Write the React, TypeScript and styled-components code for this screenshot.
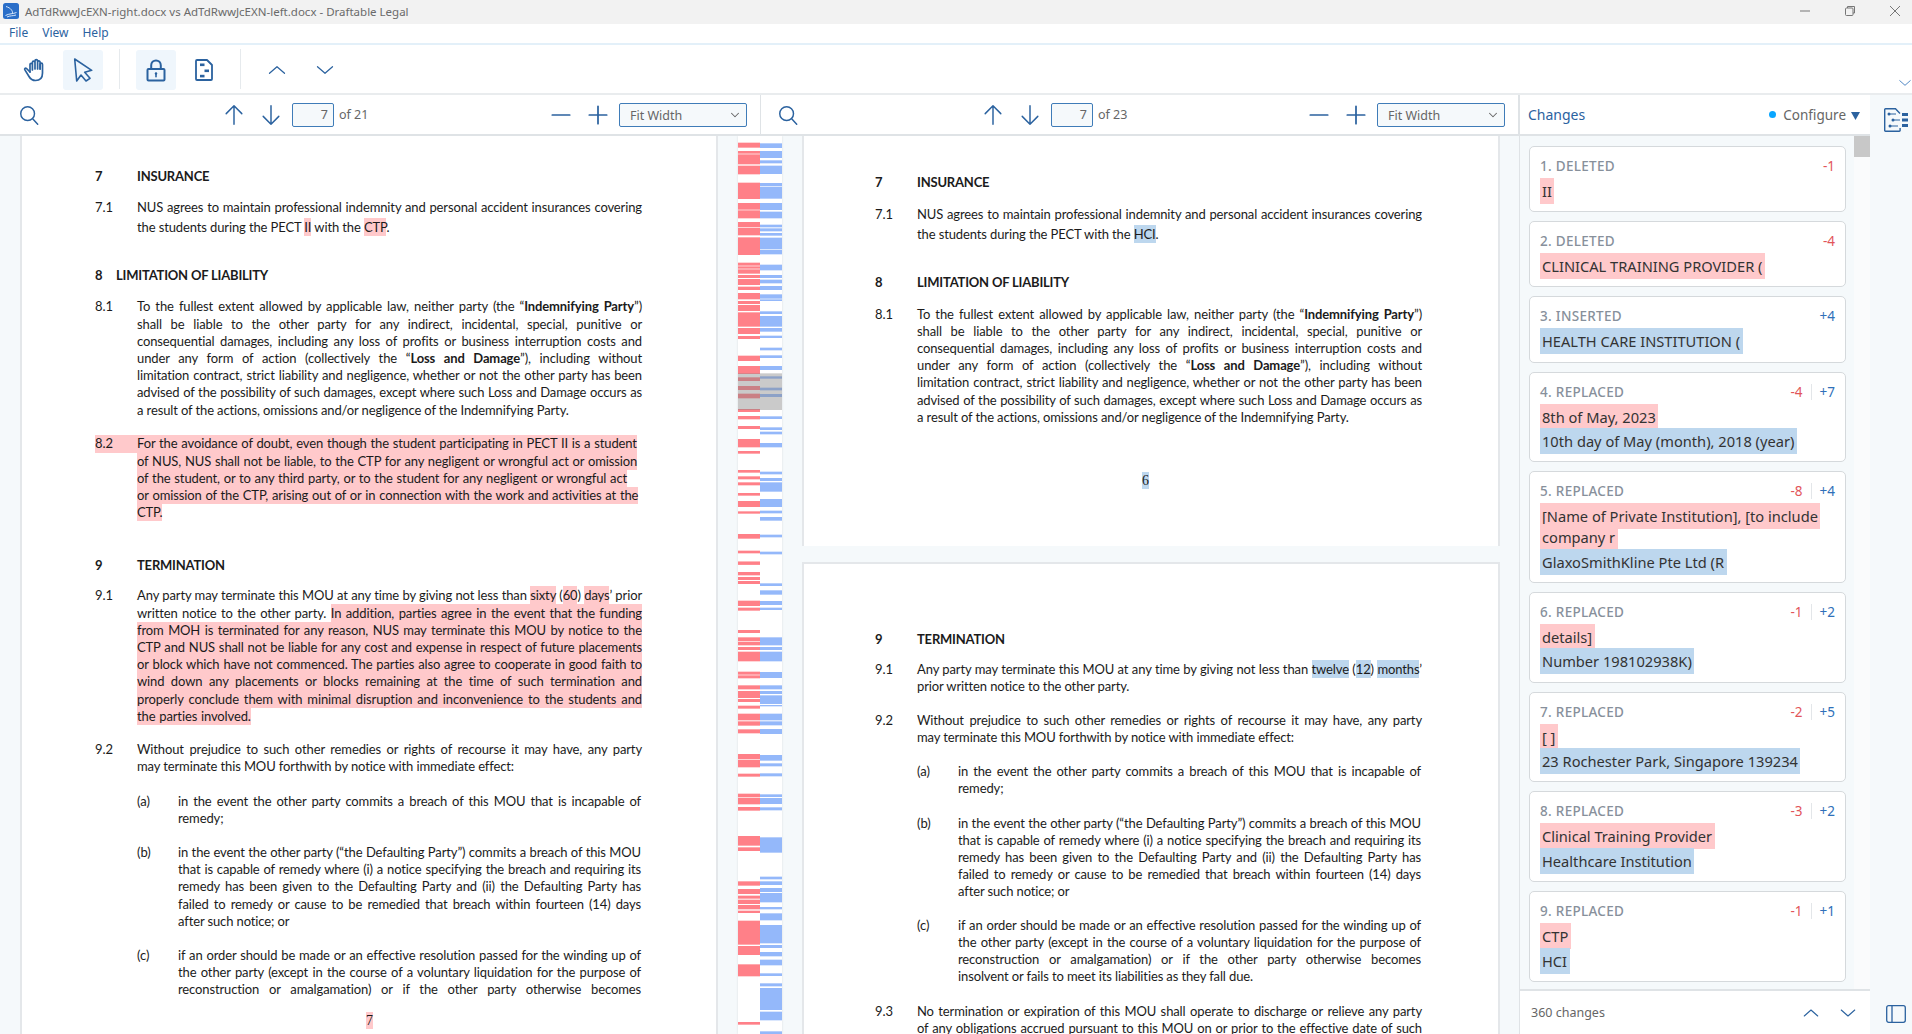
import React from "react";
import styled, { createGlobalStyle } from "styled-components";

const Global = createGlobalStyle`
  html, body { margin: 0; padding: 0; height: 100%; overflow: hidden; background: #fff; }
  * { box-sizing: border-box; }
  #root { height: 100%; }
`;

const ui = `"Noto Sans", "Open Sans", sans-serif`;
const blue = "#2b629f";

const Shell = styled.div`
  width: 1912px; height: 1034px; display: flex; flex-direction: column; overflow: hidden;
  font-family: ${ui}; color: #333;
`;

/* title bar */
const TitleBar = styled.div`
  height: 24px; background: #f2f2f2; display: flex; align-items: center; padding: 0 0 2px 3px; flex: none;
`;
const TitleText = styled.span`
  font-size: 11.5px; color: #6a6a6a; margin-left: 6px; flex: 1; white-space: nowrap;
`;
const WinControls = styled.div`
  display: flex; align-items: center; gap: 33px; padding-right: 11px; height: 100%;
`;
const MenuBar = styled.div`
  height: 21px; flex: none; display: flex; align-items: center; padding: 0 0 2px 9px; gap: 14px;
  border-bottom: 2px solid #e3f0f9; background: #fff;
`;
const MenuItem = styled.span`
  font-size: 12px; color: ${blue};
`;

/* tool bar */
const ToolBar = styled.div`
  height: 50px; flex: none; display: flex; align-items: center; padding-left: 15px; gap: 8px;
  border-bottom: 2px solid #e9ecee; position: relative;
`;
const ToolButton = styled.button<{ $on?: boolean }>`
  width: 40px; height: 40px; border: 0; padding: 0; border-radius: 3px; margin-top: 1px;
  background: ${(p) => (p.$on ? "#eff6fc" : "transparent")};
  display: flex; align-items: center; justify-content: center; color: ${blue};
`;
const ToolSep = styled.div`
  width: 1px; height: 40px; background: #e6eaed; margin: 0 8px;
`;
const Collapse = styled.span`
  position: absolute; right: 0; bottom: 3px; color: #3a78bd; line-height: 0;
`;

/* document tool bars */
const DocBars = styled.div`
  height: 41px; flex: none; display: flex;
`;
const DocBar = styled.div<{ $w: number; $pad: number }>`
  width: ${(p) => p.$w}px; padding-left: ${(p) => p.$pad}px; padding-right: 13px;
  display: flex; align-items: center; border-right: 1px solid #dfe3e6; border-bottom: 2px solid #dfe3e6;
`;
const Nav = styled.div`
  display: flex; align-items: center; margin-left: 175px;
`;
const IconBtn = styled.span<{ $w?: number }>`
  width: ${(p) => p.$w ?? 37.5}px; height: 24px; display: flex; align-items: center; justify-content: center; color: ${blue};
`;
const PageInput = styled.input`
  width: 42px; height: 24px; margin-left: 2px; border: 1px solid #3f7cb8; border-radius: 2px; background: #f5f9fb;
  text-align: right; padding: 0 5px; font: 12.5px ${ui}; color: #666; outline: none;
`;
const PageOf = styled.span`
  font-size: 12.5px; color: #666; margin-left: 5px;
`;
const ZoomGroup = styled.div`
  margin-left: auto; display: flex; align-items: center;
`;
const Select = styled.div`
  width: 128px; height: 24px; margin-left: 3px; border: 1px solid #3f7cb8; border-radius: 2px; background: #f5f9fb;
  display: flex; align-items: center; justify-content: space-between; padding: 1px 4px 0 10px;
  font-size: 12.5px; color: #666;
`;

/* main */
const Main = styled.div`
  flex: 1; display: flex; min-height: 0;
`;
const Viewer = styled.div`
  width: 1519px; display: flex; overflow: hidden; background: #f5f9fb;
`;
const LeftPane = styled.div`
  width: 718px; padding-left: 20px; overflow: hidden; flex: none;
`;
const RightPane = styled.div`
  width: 717px; overflow: hidden; flex: none; display: flex; flex-direction: column; padding-right: 19px;
`;
const Gutter = styled.div`
  width: 84px; flex: none; padding: 0 20px; overflow: hidden;
`;
const Page = styled.div<{ $top?: number; $bottom?: number; $left: number }>`
  background: #fff; flex: none;
  border-right: 2px solid #e4e7ea; border-left: 2px solid #e4e7ea;
  padding: ${(p) => p.$top ?? 0}px 0 ${(p) => p.$bottom ?? 0}px ${(p) => p.$left}px;
  font-family: "Lato", "Carlito", sans-serif; font-size: 13px; color: #1b1b1b;
`;
const Page2 = styled(Page)`
  margin-top: 16px; border-top: 2px solid #e4e7ea;
`;
const Heading = styled.div<{ $mt: number; $col?: number }>`
  display: grid; grid-template-columns: ${(p) => p.$col ?? 42}px auto; margin-top: ${(p) => p.$mt}px;
  line-height: 17.2px; font-weight: 700; letter-spacing: -0.2px;
`;
const Clause = styled.div<{ $mt: number; $lh?: number; $inset?: number; $w?: number }>`
  display: grid; grid-template-columns: ${(p) => p.$w ?? 42}px ${(p) => 505 - (p.$inset ?? 0)}px;
  margin-top: ${(p) => p.$mt}px; margin-left: ${(p) => p.$inset ?? 0}px;
  line-height: ${(p) => p.$lh ?? 17.2}px;
`;
const Num = styled.span<{ $on?: boolean }>`
  background: ${(p) => (p.$on ? "#ffc9cb" : "transparent")};
  height: 17.2px;
`;
const Line = styled.div<{ $j?: boolean; $fill?: boolean }>`
  letter-spacing: -0.12px;
  text-align: ${(p) => (p.$j ? "justify" : "left")};
  text-align-last: ${(p) => (p.$j ? "justify" : "left")};
  background: ${(p) => (p.$fill ? "#ffc9cb" : "transparent")};
`;
const Del = styled.span`
  background: #ffc9cb; padding: 1px 0;
`;
const Ins = styled.span`
  background: #bdd7ee; padding: 1px 0;
`;
const DelLine = styled(Del)`
  display: inline-block; padding: 0; height: 17.2px; word-spacing: 0.6px;
`;
const Folio = styled.div<{ $mt: number; $x: number }>`
  margin-top: ${(p) => p.$mt}px; margin-left: ${(p) => p.$x}px;
  font-family: "Liberation Serif", serif; font-size: 14px; line-height: 17.2px;
`;

/* changes panel */
const Panel = styled.div`
  width: 351px; flex: none; display: flex; flex-direction: column; margin-top: -41px; background: #fff;
  border-left: 1px solid #dfe3e6; position: relative;
`;
const PanelHead = styled.div`
  height: 41px; flex: none; display: flex; align-items: center; padding: 0 10px 0 8px; border-bottom: 2px solid #dfe3e6;
`;
const PanelTitle = styled.span`
  font-size: 14px; color: ${blue}; flex: 1;
`;
const Dot = styled.span`
  width: 7px; height: 7px; border-radius: 50%; background: #0aa6ff; margin-right: 7px;
`;
const Configure = styled.span`
  font-size: 13.5px; color: #666; margin-right: 5px;
`;
const Caret = styled.svg`
  margin-top: 2px;
`;
const PanelBody = styled.div`
  flex: 1; display: flex; min-height: 0; background: #f5f9fb;
`;
const CardList = styled.div`
  flex: 1; padding: 10px 8px 0 9px; display: flex; flex-direction: column; gap: 9px; overflow: hidden;
`;
const Scrollbar = styled.div`
  width: 16px; flex: none; background: #fafbfc;
`;
const Thumb = styled.div`
  height: 21px; background: #c8c8c8;
`;
const Card = styled.div`
  flex: none; width: 317px; background: #fff; border: 1px solid #d5d9dc; border-radius: 5px;
  padding: 9px 10px 9.6px 9.5px;
`;
const CardHead = styled.div`
  display: flex; align-items: center; height: 20px; margin-bottom: 5px; padding-left: 0.5px;
`;
const CardTitle = styled.span`
  font-size: 13.5px; font-weight: 500; color: #87909b; flex: 1; letter-spacing: 0.3px;
`;
const CountDel = styled.span`
  font-size: 13.5px; color: #e2555a;
`;
const CountIns = styled.span<{ $plain?: boolean }>`
  font-size: 13.5px; color: #2f70b9; line-height: 16px;
  ${(p) => (p.$plain ? "" : "border-left: 1px solid #e3e6e9; margin-left: 8px; padding-left: 8px;")}
`;
const Change = styled.div<{ $ins?: boolean }>`
  font-size: 14.65px; line-height: 20.6px; color: #333; margin-top: 4px;
  & > span {
    background: ${(p) => (p.$ins ? "#bdd7ee" : "#ffc9cb")};
    padding: 3px 2.5px; -webkit-box-decoration-break: clone; box-decoration-break: clone;
  }
  &:first-of-type { margin-top: 0; }
`;
const PanelFoot = styled.div`
  height: 45px; flex: none; display: flex; align-items: center; padding: 0 4px 0 11px; border-top: 2px solid #dfe3e6;
`;
const FootText = styled.span`
  font-size: 12.5px; color: #666; flex: 1;
`;
const FootBtn = styled.span`
  width: 37px; display: flex; justify-content: center; color: ${blue};
`;
const Rail = styled.div`
  width: 42px; flex: none; background: #f5f9fb; margin-top: -41px; display: flex; flex-direction: column;
  align-items: center; justify-content: space-between; padding: 13px 0 11px 10px; color: ${blue};
`;

/* icons */
const Svg: React.FC<{ s?: number; w?: number; sw?: number; children: React.ReactNode }> = ({ s = 24, w, sw = 1.6, children }) => (
  <svg width={w ?? s} height={s} viewBox="0 0 24 24" fill="none" stroke="currentColor" strokeWidth={sw} strokeLinecap="round" strokeLinejoin="round">
    {children}
  </svg>
);
const LogoMark = styled.svg`
  flex: none;
`;
const Logo = () => (
  <LogoMark width="16" height="16" viewBox="0 0 16 16">
    <rect width="16" height="16" rx="2.5" fill="#2a6ec8" />
    <path d="M3 3.5 C8 5 10 8 9.5 11 M2.5 12.5 C6 10.5 10 11 13.5 9.5 M4 14 C7 12.5 10 13 13 12" stroke="#d5e6fa" strokeWidth="1" fill="none" />
  </LogoMark>
);
const SearchI = () => <Svg s={24}><circle cx="10.5" cy="10.5" r="7.5" /><path d="M16 16l5.5 6" /></Svg>;
const ArrowUp = () => <Svg s={22}><path d="M12 22V2M3.5 10.5 12 2l8.5 8.5" /></Svg>;
const ArrowDown = () => <Svg s={22}><path d="M12 2v20M3.5 13.5 12 22l8.5-8.5" /></Svg>;
const MinusI = () => <Svg s={22} sw={1.9}><path d="M2.5 12h19" /></Svg>;
const PlusI = () => <Svg s={22} sw={1.9}><path d="M2.5 12h19M12 2.5v19" /></Svg>;
const ChevUp = ({ s = 20 }: { s?: number }) => <Svg s={s} sw={1.5}><path d="M3 16 12 8l9 8" /></Svg>;
const ChevDown = ({ s = 20 }: { s?: number }) => <Svg s={s} sw={1.5}><path d="M3 8l9 8 9-8" /></Svg>;
const Hand = () => (
  <Svg s={24} sw={1.7}>
    <path d="M7 14 3.5 10.5c-1-1-2.4.2-1.6 1.4L6 18.5c1.4 2.4 3.5 4 6.5 4 4.5 0 7-3 7-7.5V6.5c0-1.8-2.4-1.8-2.4 0V11" />
    <path d="M17.1 11V4.3c0-1.8-2.5-1.8-2.5 0V11M14.6 10V3c0-1.8-2.6-1.8-2.6 0v8M12 10.5V4.5c0-1.8-2.6-1.8-2.6 0V12M9.4 11V6.5C9.4 5 7 5 7 6.5V14" />
  </Svg>
);
const Cursor = () => (
  <Svg s={24} sw={1.6}><path d="M3.7 1 20.7 12.3 13.7 14.3 19 20.3 15 23 10 17 5.7 23Z" /></Svg>
);
const Lock = () => (
  <Svg s={24} sw={2}>
    <rect x="3.5" y="11" width="17" height="11.5" rx="1" />
    <path d="M7.2 11V7.2a4.8 4.8 0 0 1 9.6 0V11" />
    <circle cx="12" cy="15.5" r="1.2" fill="currentColor" stroke="none" />
    <path d="M12 15.5v3.2" strokeWidth="1.6" />
  </Svg>
);
const DocI = () => (
  <Svg s={24} sw={1.8}>
    <path d="M5 2h10l5 5v14a1 1 0 0 1-1 1H5a1 1 0 0 1-1-1V3a1 1 0 0 1 1-1Z" />
    <g fill="currentColor" stroke="none">
      <rect x="8" y="5.5" width="4.5" height="2.6" />
      <rect x="12.5" y="11.5" width="4.5" height="2.6" />
      <rect x="8" y="16.8" width="4.5" height="2.6" />
    </g>
  </Svg>
);
const RailDoc = () => (
  <svg width="24" height="24" viewBox="0 0 24 24" fill="none" stroke="currentColor" strokeWidth="1.4">
    <path d="M16 5.5 11.5.8H1.5a.8.8 0 0 0-.8.8v20.8a.8.8 0 0 0 .8.8h13.8a.8.8 0 0 0 .8-.8V20" />
    <path d="M5 6h7M9 12h7M6 18h8" strokeWidth="1" />
    <g fill="currentColor" stroke="none">
      <circle cx="5" cy="6" r="1.5" /><circle cx="9" cy="12" r="1.5" /><circle cx="6" cy="18" r="1.5" />
      <rect x="18" y="5" width="6" height="3" /><rect x="18" y="10.5" width="6" height="3" /><rect x="18" y="16" width="6" height="3" />
    </g>
  </svg>
);
const RailPanel = () => (
  <svg width="20" height="18" viewBox="0 0 20 18" fill="none" stroke="currentColor" strokeWidth="1.3">
    <rect x=".7" y=".7" width="18.6" height="16.6" rx="2" /><path d="M6 .7v16.6" />
  </svg>
);

/* overview strip */
const red: [number, number][] = [[128,143],[153,161],[163,193],[197,223],[248,297],[309,329],[331,355],[366,381],[383,406],[412,465],[488,497],[499,506],[508,521],[525,534],[537,555],[560,570],[579,598],[603,612],[615,633],[637,680],[684,702],[708,717],[767,783],[798,822],[832,843],[858,870],[881,895],[927,936],[948,958],[978,987],[1017,1042],[1053,1061],[1110,1118],[1129,1138],[1147,1156],[1179,1187],[1203,1221],[1234,1241],[1302,1316],[1352,1360],[1385,1394]];
const blu: [number, number][] = [[130,144],[153,174],[181,190],[197,222],[249,258],[260,296],[309,330],[335,355],[374,382],[385,394],[399,407],[413,447],[449,463],[494,511],[525,534],[539,550],[558,570],[583,596],[598,603],[634,642],[648,680],[684,695],[707,714],[743,751],[766,774],[798,810],[829,836],[863,871],[882,891],[949,957],[982,990],[995,1003],[1029,1042],[1115,1123],[1134,1143],[1147,1175],[1197,1221],[1232,1240],[1251,1262],[1304,1312],[1355,1363]];
const red2: [number, number][] = [[5,14],[36,46],[51,60],[63,72],[122,138],[143,152],[210,219],[232,243],[245,256],[261,270],[275,304],[335,344],[346,355],[376,388],[393,414],[417,426],[437,446],[461,481],[484,497],[508,520],[582,598],[600,622],[641,650],[701,712],[714,733],[741,752],[828,857],[862,873],[964,977],[987,1002],[1007,1016],[1019,1032],[1035,1048],[1052,1059],[1082,1154],[1158,1185],[1213,1249],[1386,1394]];
const blu2: [number, number][] = [[70,78],[91,104],[123,135],[143,150],[232,256],[261,270],[275,304],[336,354],[376,388],[393,402],[406,432],[435,439],[461,481],[484,496],[507,522],[585,602],[610,619],[640,649],[703,711],[714,732],[742,751],[832,878],[950,958],[964,975],[984,996],[999,1027],[1041,1048],[1060,1081],[1095,1150],[1155,1164],[1176,1189],[1199,1216],[1240,1248],[1270,1279],[1284,1350],[1355,1381],[1414,1422]];

const toY = (base: number, z: number) => base + z / 3 - 136;
const Strip = styled.svg`
  display: block; background: #fff; box-shadow: 0 0 2px #d8dcdf;
`;
const Overview = () => (
  <Strip width="44" height="898" viewBox="0 0 44 898">
    {[...red.map((b) => [100, ...b]), ...red2.map((b) => [560, ...b])].map(([base, a, z], i) => (
      <rect key={"r" + i} x="0" y={toY(base, a)} width="22" height={(z - a) / 3} fill="#ff8088" />
    ))}
    {[...blu.map((b) => [100, ...b]), ...blu2.map((b) => [560, ...b])].map(([base, a, z], i) => (
      <rect key={"b" + i} x="22" y={toY(base, a)} width="22" height={(z - a) / 3} fill="#94b8fa" />
    ))}
    <rect x="0" y={toY(100, 820)} width="44" height={110 / 3} fill="#808080" fillOpacity="0.42" />
  </Strip>
);

/* shared clause text */
const Clause81 = () => (
  <div>
    <Line $j>To the fullest extent allowed by applicable law, neither party (the “<b>Indemnifying Party</b>”)</Line>
    <Line $j>shall be liable to the other party for any indirect, incidental, special, punitive or</Line>
    <Line $j>consequential damages, including any loss of profits or business interruption costs and</Line>
    <Line $j>under any form of action (collectively the “<b>Loss and Damage</b>”), including without</Line>
    <Line $j>limitation contract, strict liability and negligence, whether or not the other party has been</Line>
    <Line $j>advised of the possibility of such damages, except where such Loss and Damage occurs as</Line>
    <Line>a result of the actions, omissions and/or negligence of the Indemnifying Party.</Line>
  </div>
);
const Lines92 = () => (
  <div>
    <Line $j>Without prejudice to such other remedies or rights of recourse it may have, any party</Line>
    <Line>may terminate this MOU forthwith by notice with immediate effect:</Line>
  </div>
);
const LinesA = () => (
  <div>
    <Line $j>in the event the other party commits a breach of this MOU that is incapable of</Line>
    <Line>remedy;</Line>
  </div>
);
const LinesB = () => (
  <div>
    <Line $j>in the event the other party (“the Defaulting Party”) commits a breach of this MOU</Line>
    <Line $j>that is capable of remedy where (i) a notice specifying the breach and requiring its</Line>
    <Line $j>remedy has been given to the Defaulting Party and (ii) the Defaulting Party has</Line>
    <Line $j>failed to remedy or cause to be remedied that breach within fourteen (14) days</Line>
    <Line>after such notice; or</Line>
  </div>
);

const cards: { t: string; d?: string; i?: string; del?: string; ins?: string }[] = [
  { t: "1. DELETED", d: "-1", del: "II" },
  { t: "2. DELETED", d: "-4", del: "CLINICAL TRAINING PROVIDER (" },
  { t: "3. INSERTED", i: "+4", ins: "HEALTH CARE INSTITUTION (" },
  { t: "4. REPLACED", d: "-4", i: "+7", del: "8th of May, 2023", ins: "10th day of May (month), 2018 (year)" },
  { t: "5. REPLACED", d: "-8", i: "+4", del: "[Name of Private Institution], [to include company r", ins: "GlaxoSmithKline Pte Ltd (R" },
  { t: "6. REPLACED", d: "-1", i: "+2", del: "details]", ins: "Number 198102938K)" },
  { t: "7. REPLACED", d: "-2", i: "+5", del: "[ ]", ins: "23 Rochester Park, Singapore 139234" },
  { t: "8. REPLACED", d: "-3", i: "+2", del: "Clinical Training Provider", ins: "Healthcare Institution" },
  { t: "9. REPLACED", d: "-1", i: "+1", del: "CTP", ins: "HCI" },
];

const PaneBar: React.FC<{ w: number; pad: number; of: string }> = ({ w, pad, of }) => (
  <DocBar $w={w} $pad={pad}>
    <IconBtn $w={22}><SearchI /></IconBtn>
    <Nav>
      <IconBtn><ArrowUp /></IconBtn>
      <IconBtn><ArrowDown /></IconBtn>
      <PageInput readOnly value="7" />
      <PageOf>{of}</PageOf>
    </Nav>
    <ZoomGroup>
      <IconBtn $w={37}><MinusI /></IconBtn>
      <IconBtn $w={37}><PlusI /></IconBtn>
      <Select>Fit Width <Svg s={14} sw={1.8}><path d="M6 9l6 6 6-6" /></Svg></Select>
    </ZoomGroup>
  </DocBar>
);

export default function App() {
  return (
    <Shell>
      <Global />
      <TitleBar>
        <Logo />
        <TitleText>AdTdRwwJcEXN-right.docx vs AdTdRwwJcEXN-left.docx - Draftable Legal</TitleText>
        <WinControls>
          <svg width="12" height="12" viewBox="0 0 12 12" stroke="#777" fill="none"><path d="M1 6h10" /></svg>
          <svg width="12" height="12" viewBox="0 0 12 12" stroke="#777" fill="none"><rect x="1.5" y="3" width="7.5" height="7.5" rx="1" /><path d="M3.5 3V1.5h7V8H9" /></svg>
          <svg width="12" height="12" viewBox="0 0 12 12" stroke="#777" fill="none"><path d="M1 1l10 10M11 1 1 11" /></svg>
        </WinControls>
      </TitleBar>
      <MenuBar>
        <MenuItem>File</MenuItem>
        <MenuItem>View</MenuItem>
        <MenuItem>Help</MenuItem>
      </MenuBar>
      <ToolBar>
        <ToolButton><Hand /></ToolButton>
        <ToolButton $on><Cursor /></ToolButton>
        <ToolSep />
        <ToolButton $on><Lock /></ToolButton>
        <ToolButton><DocI /></ToolButton>
        <ToolSep />
        <ToolButton><ChevUp /></ToolButton>
        <ToolButton><ChevDown /></ToolButton>
        <Collapse><ChevDown s={14} /></Collapse>
      </ToolBar>
      <DocBars>
        <PaneBar w={761} pad={18} of="of 21" />
        <PaneBar w={758} pad={16} of="of 23" />
      </DocBars>
      <Main>
        <Viewer>
          <LeftPane>
            <Page $top={32.2} $bottom={60} $left={73}>
              <Heading $mt={0}><span>7</span><span>INSURANCE</span></Heading>
              <Clause $mt={12} $lh={20}>
                <span>7.1</span>
                <div>
                  <Line $j>NUS agrees to maintain professional indemnity and personal accident insurances covering</Line>
                  <Line>the students during the PECT <Del>II</Del> with the <Del>CTP</Del>.</Line>
                </div>
              </Clause>
              <Heading $mt={30} $col={21}><span>8</span><span>LIMITATION OF LIABILITY</span></Heading>
              <Clause $mt={13.8}><span>8.1</span><Clause81 /></Clause>
              <Clause $mt={16.6}>
                <Num $on>8.2</Num>
                <div>
                  <Line><DelLine>For the avoidance of doubt, even though the student participating in PECT II is a student</DelLine></Line>
                  <Line><DelLine>of NUS, NUS shall not be liable, to the CTP for any negligent or wrongful act or omission</DelLine></Line>
                  <Line><DelLine>of the student, or to any third party, or to the student for any negligent or wrongful act</DelLine></Line>
                  <Line><DelLine>or omission of the CTP, arising out of or in connection with the work and activities at the</DelLine></Line>
                  <Line><DelLine>CTP.</DelLine></Line>
                </div>
              </Clause>
              <Heading $mt={36}><span>9</span><span>TERMINATION</span></Heading>
              <Clause $mt={12.8}>
                <span>9.1</span>
                <div>
                  <Line $j>Any party may terminate this MOU at any time by giving not less than <Del>sixty</Del> (<Del>60</Del>) <Del>days</Del>’ prior</Line>
                  <Line $j>written notice to the other party. <Del>In addition, parties agree in the event that the funding</Del></Line>
                  <Line $j $fill>from MOH is terminated for any reason, NUS may terminate this MOU by notice to the</Line>
                  <Line $j $fill>CTP and NUS shall not be liable for any cost and expense in respect of future placements</Line>
                  <Line $j $fill>or block which have not commenced. The parties also agree to cooperate in good faith to</Line>
                  <Line $j $fill>wind down any placements or blocks remaining at the time of such termination and</Line>
                  <Line $j $fill>properly conclude them with minimal disruption and inconvenience to the students and</Line>
                  <Line><DelLine>the parties involved.</DelLine></Line>
                </div>
              </Clause>
              <Clause $mt={15.9}><span>9.2</span><Lines92 /></Clause>
              <Clause $mt={17.6} $inset={42} $w={41}><span>(a)</span><LinesA /></Clause>
              <Clause $mt={16.6} $inset={42} $w={41}><span>(b)</span><LinesB /></Clause>
              <Clause $mt={17} $inset={42} $w={41}>
                <span>(c)</span>
                <div>
                  <Line $j>if an order should be made or an effective resolution passed for the winding up of</Line>
                  <Line $j>the other party (except in the course of a voluntary liquidation for the purpose of</Line>
                  <Line $j>reconstruction or amalgamation) or if the other party otherwise becomes</Line>
                </div>
              </Clause>
              <Folio $mt={13.4} $x={271}><Del>7</Del></Folio>
            </Page>
          </LeftPane>
          <Gutter><Overview /></Gutter>
          <RightPane>
            <Page $top={38.4} $bottom={57.4} $left={71}>
              <Heading $mt={0}><span>7</span><span>INSURANCE</span></Heading>
              <Clause $mt={12} $lh={20}>
                <span>7.1</span>
                <div>
                  <Line $j>NUS agrees to maintain professional indemnity and personal accident insurances covering</Line>
                  <Line>the students during the PECT with the <Ins>HCI</Ins>.</Line>
                </div>
              </Clause>
              <Heading $mt={30}><span>8</span><span>LIMITATION OF LIABILITY</span></Heading>
              <Clause $mt={14.8}><span>8.1</span><Clause81 /></Clause>
              <Folio $mt={45.6} $x={267}><Ins>6</Ins></Folio>
            </Page>
            <Page2 $top={66.4} $left={71}>
              <Heading $mt={0}><span>9</span><span>TERMINATION</span></Heading>
              <Clause $mt={12.8}>
                <span>9.1</span>
                <div>
                  <Line $j>Any party may terminate this MOU at any time by giving not less than <Ins>twelve</Ins> (<Ins>12</Ins>) <Ins>months</Ins>’</Line>
                  <Line>prior written notice to the other party.</Line>
                </div>
              </Clause>
              <Clause $mt={16.6}><span>9.2</span><Lines92 /></Clause>
              <Clause $mt={16.6} $inset={42} $w={41}><span>(a)</span><LinesA /></Clause>
              <Clause $mt={17.6} $inset={42} $w={41}><span>(b)</span><LinesB /></Clause>
              <Clause $mt={16} $inset={42} $w={41}>
                <span>(c)</span>
                <div>
                  <Line $j>if an order should be made or an effective resolution passed for the winding up of</Line>
                  <Line $j>the other party (except in the course of a voluntary liquidation for the purpose of</Line>
                  <Line $j>reconstruction or amalgamation) or if the other party otherwise becomes</Line>
                  <Line>insolvent or fails to meet its liabilities as they fall due.</Line>
                </div>
              </Clause>
              <Clause $mt={17.2}>
                <span>9.3</span>
                <div>
                  <Line $j>No termination or expiration of this MOU shall operate to discharge or relieve any party</Line>
                  <Line $j>of any obligations accrued pursuant to this MOU on or prior to the effective date of such</Line>
                </div>
              </Clause>
            </Page2>
          </RightPane>
        </Viewer>
        <Panel>
          <PanelHead>
            <PanelTitle>Changes</PanelTitle>
            <Dot />
            <Configure>Configure</Configure>
            <Caret width="9" height="8" viewBox="0 0 9 8"><path d="M0 0h9L4.5 8Z" fill={blue} /></Caret>
          </PanelHead>
          <PanelBody>
            <CardList>
              {cards.map((c) => (
                <Card key={c.t}>
                  <CardHead>
                    <CardTitle>{c.t}</CardTitle>
                    {c.d && <CountDel>{c.d}</CountDel>}
                    {c.i && <CountIns $plain={!c.d}>{c.i}</CountIns>}
                  </CardHead>
                  {c.del && <Change><span>{c.del}</span></Change>}
                  {c.ins && <Change $ins><span>{c.ins}</span></Change>}
                </Card>
              ))}
            </CardList>
            <Scrollbar><Thumb /></Scrollbar>
          </PanelBody>
          <PanelFoot>
            <FootText>360 changes</FootText>
            <FootBtn><ChevUp s={18} /></FootBtn>
            <FootBtn><ChevDown s={18} /></FootBtn>
          </PanelFoot>
        </Panel>
        <Rail>
          <RailDoc />
          <RailPanel />
        </Rail>
      </Main>
    </Shell>
  );
}
